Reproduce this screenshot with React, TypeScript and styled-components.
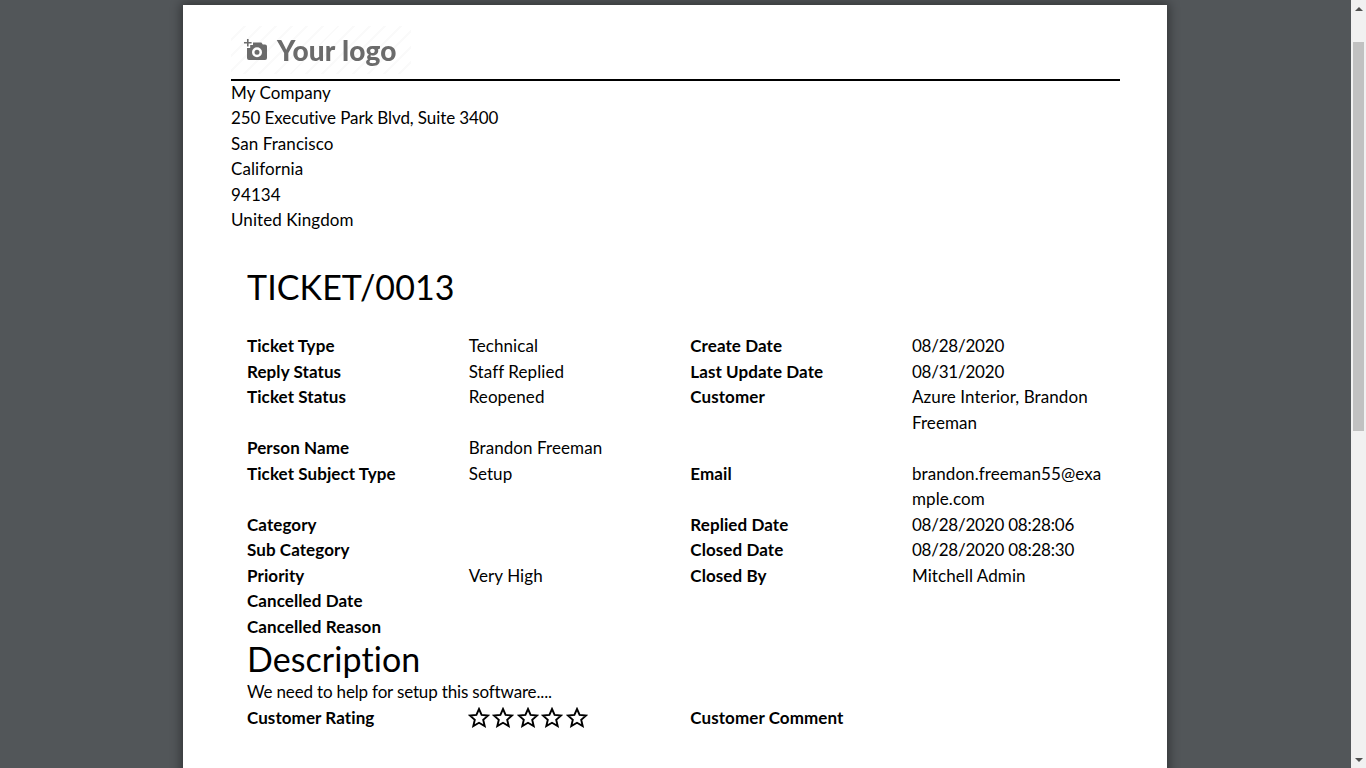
import styled, { createGlobalStyle } from "styled-components";

const GlobalStyle = createGlobalStyle`
  html, body {
    margin: 0;
    height: 100%;
    overflow: hidden;
    background: #525659;
  }
  * { box-sizing: border-box; }
`;

const rows: [string, string, string, string][] = [
  ["Ticket Type", "Technical", "Create Date", "08/28/2020"],
  ["Reply Status", "Staff Replied", "Last Update Date", "08/31/2020"],
  ["Ticket Status", "Reopened", "Customer", "Azure Interior, Brandon Freeman"],
  ["Person Name", "Brandon Freeman", "", ""],
  ["Ticket Subject Type", "Setup", "Email", "brandon.freeman55@example.com"],
  ["Category", "", "Replied Date", "08/28/2020 08:28:06"],
  ["Sub Category", "", "Closed Date", "08/28/2020 08:28:30"],
  ["Priority", "Very High", "Closed By", "Mitchell Admin"],
  ["Cancelled Date", "", "", ""],
  ["Cancelled Reason", "", "", ""],
];

const address = [
  "My Company",
  "250 Executive Park Blvd, Suite 3400",
  "San Francisco",
  "California",
  "94134",
  "United Kingdom",
];

const isDate = (text: string) => /^\d\d\/\d\d\//.test(text);

function Star() {
  return (
    <svg width="22" height="21" viewBox="0 0 22 21" fill="none" stroke="#000" strokeWidth="1.9" strokeLinejoin="miter">
      <path d="M11 2 13.6 7.9 20 8.6 15.2 12.8 16.7 19.1 11 15.8 5.3 19.1 6.8 12.8 2 8.6 8.4 7.9Z" />
    </svg>
  );
}

function Logo() {
  return (
    <LogoBox>
      <svg width="24" height="22" viewBox="0 0 24 22">
        <path fill="#6b6b6b" d="M0 3h3V0h1.6v3h3v1.6h-3v3H3v-3H0Z" />
        <path
          fill="#6b6b6b"
          fillRule="evenodd"
          d="M9 3.5h8.4l1.4 2H21a2 2 0 0 1 2 2V19a2 2 0 0 1-2 2H5a2 2 0 0 1-2-2V9h3.2V6H9ZM13 8.2a5 5 0 1 0 0 10 5 5 0 0 0 0-10Zm0 2.5a2.5 2.5 0 1 1 0 5 2.5 2.5 0 0 1 0-5Z"
        />
      </svg>
      <LogoText>Your logo</LogoText>
    </LogoBox>
  );
}

export default function App() {
  return (
    <Viewer>
      <GlobalStyle />
      <Canvas>
        <Sheet>
          <Header>
            <Logo />
          </Header>
          <Address>
            {address.map((line) => (
              <AddressLine key={line} $tight={line.length > 30}>
                {line}
              </AddressLine>
            ))}
          </Address>
          <Ticket>
            <Title>TICKET/0013</Title>
            <Grid>
              {rows.map((row) => (
                <Row key={row[0]}>
                  <Label>{row[0]}</Label>
                  <Value>{row[1]}</Value>
                  <Label>{row[2]}</Label>
                  <Value $date={isDate(row[3])}>{row[3]}</Value>
                </Row>
              ))}
            </Grid>
            <Subtitle>Description</Subtitle>
            <Description>We need to help for setup this software....</Description>
            <Row>
              <Label>Customer Rating</Label>
              <Value>
                <Stars>
                  {[1, 2, 3, 4, 5].map((n) => (
                    <Star key={n} />
                  ))}
                </Stars>
              </Value>
              <Label>Customer Comment</Label>
              <Value />
            </Row>
          </Ticket>
        </Sheet>
      </Canvas>
      <Scrollbar>
        <Arrow $up />
        <Thumb />
        <TrackFill />
        <Arrow />
      </Scrollbar>
    </Viewer>
  );
}

const Viewer = styled.div`
  display: flex;
  height: 100vh;
  overflow: hidden;
  font-family: Lato, "Liberation Sans", sans-serif;
  font-size: 17px;
  line-height: 25.5px;
  letter-spacing: 0.08px;
  color: #000;
  font-variant-ligatures: none;
`;

const Canvas = styled.div`
  flex: 1;
  min-width: 0;
  height: 100vh;
  overflow: hidden;
  padding: 5px 184px 0 183px;
  background: #525659;
`;

const Sheet = styled.div`
  width: 984px;
  min-height: 900px;
  padding: 0 47px 0 48px;
  background: #fff;
  box-shadow: 0 0 10px 2px rgba(0, 0, 0, 0.4);
`;

const Header = styled.div`
  height: 76px;
  padding-top: 21px;
  border-bottom: 2px solid #000;
`;

const LogoBox = styled.div`
  display: flex;
  align-items: center;
  gap: 9px;
  width: 180px;
  height: 48px;
  padding: 0 0 0 13px;
  background: repeating-linear-gradient(135deg, #fff 0 9px, #fafafa 9px 11px);
  filter: blur(0.3px);
`;

const LogoText = styled.span`
  padding-top: 2px;
  font-size: 28px;
  font-weight: 900;
  color: #6b6b6b;
  letter-spacing: 0.2px;
`;

const Address = styled.div`
  margin-top: -1.4px;
`;

const AddressLine = styled.div<{ $tight?: boolean }>`
  letter-spacing: ${(p) => (p.$tight ? "-0.09px" : "inherit")};
`;

const Ticket = styled.div`
  width: 886.67px;
  padding-top: 28.4px;
  margin-left: 1px;
`;

const Title = styled.h1`
  margin: 0 0 21px 15px;
  font-size: 34px;
  font-weight: 400;
  line-height: 51px;
`;

const Grid = styled.div`
  display: flex;
  flex-direction: column;
`;

const Row = styled.div`
  display: grid;
  grid-template-columns: repeat(4, 221.67px);
`;

const Label = styled.div`
  padding: 0 15px;
  font-weight: 700;
`;

const Value = styled.div<{ $date?: boolean }>`
  padding: 0 15px;
  overflow-wrap: anywhere;
  letter-spacing: ${(p) => (p.$date ? "-0.22px" : "inherit")};
`;

const Subtitle = styled.h2`
  margin: 0 0 0 15px;
  font-size: 34px;
  font-weight: 400;
  line-height: 39.8px;
`;

const Description = styled.div`
  margin-left: 15px;
  line-height: 25.5px;
  padding-bottom: 1px;
  letter-spacing: -0.16px;
`;

const Stars = styled.div`
  display: flex;
  gap: 2.6px;
  height: 25.5px;
  align-items: center;
  margin: -1px 0 0 -1px;
`;

const Scrollbar = styled.div`
  display: flex;
  flex-direction: column;
  flex: none;
  width: 15px;
  height: 100vh;
  background: #f1f1f1;
`;

const Arrow = styled.div<{ $up?: boolean }>`
  flex: none;
  height: 17px;
  display: flex;
  align-items: center;
  justify-content: center;

  &::before {
    content: "";
    border-left: 4px solid transparent;
    border-right: 4px solid transparent;
    ${(p) => (p.$up ? "border-bottom: 4px solid #505050;" : "border-top: 4px solid #505050;")}
  }
`;

const Thumb = styled.div`
  flex: none;
  height: 389px;
  margin: 25px 2px 0 2px;
  background: #c1c1c1;
`;

const TrackFill = styled.div`
  flex: 1;
`;
